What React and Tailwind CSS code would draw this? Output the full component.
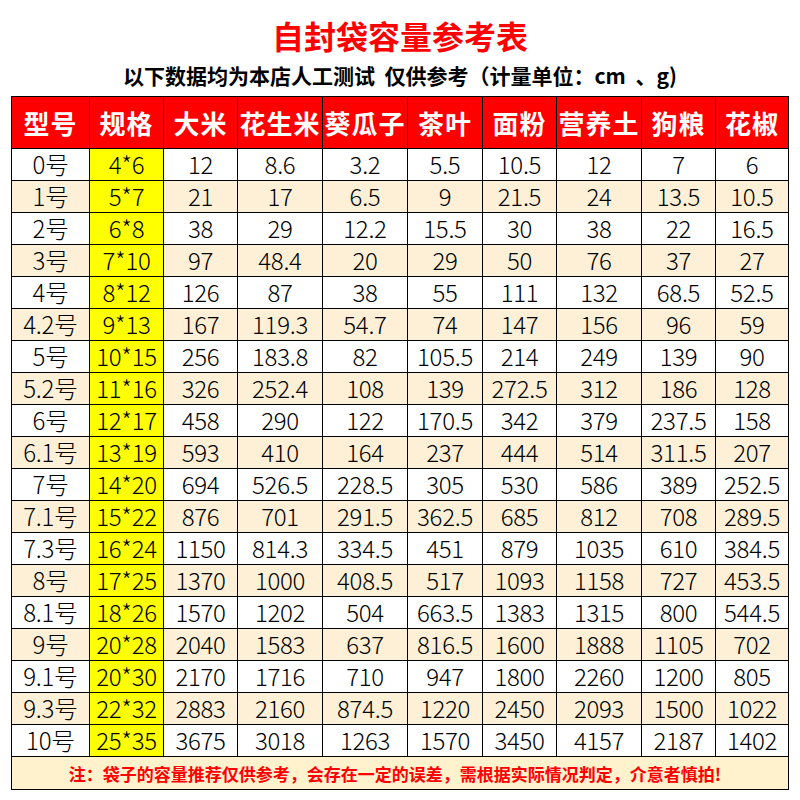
import React from "react";

const headers = ["型号", "规格", "大米", "花生米", "葵瓜子", "茶叶", "面粉", "营养土", "狗粮", "花椒"];

const rows = [
  ["0号", "4*6", "12", "8.6", "3.2", "5.5", "10.5", "12", "7", "6"],
  ["1号", "5*7", "21", "17", "6.5", "9", "21.5", "24", "13.5", "10.5"],
  ["2号", "6*8", "38", "29", "12.2", "15.5", "30", "38", "22", "16.5"],
  ["3号", "7*10", "97", "48.4", "20", "29", "50", "76", "37", "27"],
  ["4号", "8*12", "126", "87", "38", "55", "111", "132", "68.5", "52.5"],
  ["4.2号", "9*13", "167", "119.3", "54.7", "74", "147", "156", "96", "59"],
  ["5号", "10*15", "256", "183.8", "82", "105.5", "214", "249", "139", "90"],
  ["5.2号", "11*16", "326", "252.4", "108", "139", "272.5", "312", "186", "128"],
  ["6号", "12*17", "458", "290", "122", "170.5", "342", "379", "237.5", "158"],
  ["6.1号", "13*19", "593", "410", "164", "237", "444", "514", "311.5", "207"],
  ["7号", "14*20", "694", "526.5", "228.5", "305", "530", "586", "389", "252.5"],
  ["7.1号", "15*22", "876", "701", "291.5", "362.5", "685", "812", "708", "289.5"],
  ["7.3号", "16*24", "1150", "814.3", "334.5", "451", "879", "1035", "610", "384.5"],
  ["8号", "17*25", "1370", "1000", "408.5", "517", "1093", "1158", "727", "453.5"],
  ["8.1号", "18*26", "1570", "1202", "504", "663.5", "1383", "1315", "800", "544.5"],
  ["9号", "20*28", "2040", "1583", "637", "816.5", "1600", "1888", "1105", "702"],
  ["9.1号", "20*30", "2170", "1716", "710", "947", "1800", "2260", "1200", "805"],
  ["9.3号", "22*32", "2883", "2160", "874.5", "1220", "2450", "2093", "1500", "1022"],
  ["10号", "25*35", "3675", "3018", "1263", "1570", "3450", "4157", "2187", "1402"],
];

export default function App() {
  return (
    <div className="w-[800px] h-[800px] bg-white font-['Noto_Sans_CJK_SC',sans-serif] overflow-hidden">
      <div className="pt-[15px] h-[40px] box-content flex items-center justify-center text-[32px] leading-[40px] font-bold text-[#ff0000]">
        自封袋容量参考表
      </div>
      <div className="mt-[8px] h-[24px] flex items-center justify-center text-[21px] leading-[24px] font-bold text-black">
        以下数据均为本店人工测试&nbsp;&nbsp;仅供参考（计量单位：cm&nbsp;&nbsp;、g)
      </div>
      <div className="mt-[9px] ml-[11px] w-[778px] border-l border-t border-black grid grid-cols-[78px_74px_74px_85px_85px_75px_74px_85px_74px_73px]">
        {headers.map((h) => (
          <div
            key={h}
            className="h-[52px] border-r border-b border-black bg-[#ff0000] text-white font-bold text-[26px] leading-none flex items-center justify-center tracking-[1px]"
          >
            {h}
          </div>
        ))}
        {rows.map((r, i) =>
          r.map((c, j) => (
            <div
              key={i + "-" + j}
              className={
                "h-[32px] pb-[2px] border-r border-b border-black flex items-center justify-center text-[24px] leading-none font-light tracking-[-0.3px] text-black " +
                (j === 1 ? "bg-[#ffff00]" : i % 2 === 1 ? "bg-[#fdf0d6]" : "bg-white")
              }
            >
              {c}
            </div>
          ))
        )}
        <div className="col-span-10 h-[33px] pr-[10px] border-r border-b border-black bg-[#fff2cc] flex items-center justify-center text-[17px] leading-none font-bold text-[#ff0000]">
          注：袋子的容量推荐仅供参考，会存在一定的误差，需根据实际情况判定，介意者慎拍!
        </div>
      </div>
    </div>
  );
}
